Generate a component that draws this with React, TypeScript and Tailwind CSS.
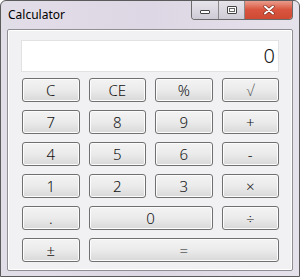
import React from "react";

type Key = { label: string; span?: number; cls?: string };

const rows: Key[][] = [
  [{ label: "C" }, { label: "CE" }, { label: "%" }, { label: "√", cls: "text-[#555]" }],
  [{ label: "7" }, { label: "8" }, { label: "9" }, { label: "+", cls: "text-[13px]" }],
  [{ label: "4" }, { label: "5" }, { label: "6" }, { label: "-", cls: "text-[13px]" }],
  [{ label: "1" }, { label: "2" }, { label: "3" }, { label: "×", cls: "text-[13px]" }],
  [{ label: ".", cls: "text-[11px]" }, { label: "0", span: 2 }, { label: "÷", cls: "text-[12px]" }],
  [{ label: "±", cls: "text-[13px]" }, { label: "=", span: 3, cls: "text-[13px]" }],
];

function CalcKey({ k }: { k: Key }) {
  return (
    <button
      className={`h-[24px] rounded-[3px] border border-[#707070] bg-gradient-to-b from-[#f3f3f3] via-[#ebebeb] to-[#d8d8d8] text-[15px] font-light leading-none text-[#111] shadow-[inset_0_0_0_1px_#fcfcfc] ${
        k.span === 2 ? "col-span-2" : k.span === 3 ? "col-span-3" : ""
      } ${k.cls ?? ""}`}
    >
      {k.label}
    </button>
  );
}

export default function App() {
  return (
    <div
      className="flex h-[277px] w-[300px] flex-col overflow-hidden rounded-t-[6px] border border-[#5b5b5b] bg-gradient-to-r from-[#e2dee8] via-[#ddd6e4] to-[#e6e2eb]"
      style={{ fontFamily: '"Noto Sans", "Open Sans", sans-serif' }}
    >
      {/* Title bar */}
      <div className="flex h-[28px] shrink-0 items-start justify-between pl-[7px] pr-[6px]">
        <span className="mt-[5px] text-[12px] text-black">Calculator</span>
        <div className="-mt-px flex h-[20px] overflow-hidden rounded-b-[4px] border border-t-0 border-[#6b6b6b]">
          <div className="flex w-[27px] items-center justify-center border-r border-[#8a8a8a] bg-gradient-to-b from-[#e8e6ec] to-[#cfcbd6]">
            <div className="mt-[4px] h-[4px] w-[10px] rounded-[1px] border border-[#444] bg-white" />
          </div>
          <div className="flex w-[26px] items-center justify-center border-r border-[#8a8a8a] bg-gradient-to-b from-[#e8e6ec] to-[#cfcbd6]">
            <div className="h-[8px] w-[10px] rounded-[1px] border border-[#444] bg-white p-[1px]">
              <div className="h-full w-full border border-[#666]" />
            </div>
          </div>
          <div className="flex w-[47px] items-center justify-center bg-gradient-to-b from-[#eba395] via-[#d9553f] to-[#cf4a33]">
            <svg width="12" height="10" viewBox="0 0 12 10">
              <path d="M2 1.5 L10 8.5 M10 1.5 L2 8.5" stroke="#7a2a1e" strokeWidth="3.2" strokeLinecap="round" />
              <path d="M2 1.5 L10 8.5 M10 1.5 L2 8.5" stroke="#ffffff" strokeWidth="2" strokeLinecap="round" />
            </svg>
          </div>
        </div>
      </div>

      {/* Client area */}
      <div className="mx-[6px] flex h-[242px] flex-col rounded-[2px] border border-[#8f8f93] bg-[#f1f0f3] px-[13px] pt-[10px] shadow-[inset_0_0_0_1px_#ffffff]">
        <div className="flex h-[32px] items-center justify-end border border-[#e2e2e2] bg-white pr-[3px] text-[20px] font-light leading-none text-[#111]">
          0
        </div>
        <div className="mt-[6px] grid grid-cols-4 gap-x-[9px] gap-y-[8px] pl-px">
          {rows.flat().map((k, i) => (
            <CalcKey key={i} k={k} />
          ))}
        </div>
      </div>
    </div>
  );
}
